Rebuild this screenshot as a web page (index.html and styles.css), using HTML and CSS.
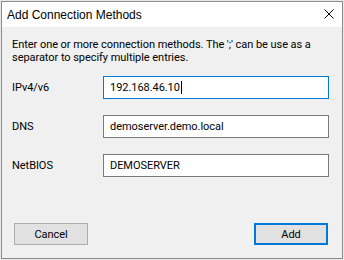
FILE: index.html
```html
<!DOCTYPE html>
<html lang="en">
<head>
    <meta charset="UTF-8">
    <meta name="viewport" content="width=device-width, initial-scale=1.0">
    <title>Add Connection Methods</title>
    <link rel="stylesheet" href="styles.css">
</head>
<body>
    <div class="window">
        <div class="title-bar">
            <span class="title">Add Connection Methods</span>
            <svg class="close" width="10" height="10" viewBox="0 0 10 10">
                <path d="M0.5 0.5 L9.5 9.5 M9.5 0.5 L0.5 9.5" stroke="#000" stroke-width="1" fill="none"/>
            </svg>
        </div>

        <div class="content">
            <p class="intro">Enter one or more connection methods. The ';' can be use as a separator to specify multiple entries.</p>

            <div class="fields">
                <div class="field">
                    <label>IPv4/v6</label>
                    <div class="textbox focused"><span class="caret">192.168.46.10</span></div>
                </div>
                <div class="field">
                    <label>DNS</label>
                    <div class="textbox">demoserver.demo.local</div>
                </div>
                <div class="field">
                    <label>NetBIOS</label>
                    <div class="textbox">DEMOSERVER</div>
                </div>
            </div>

            <div class="buttons">
                <button class="btn">Cancel</button>
                <button class="btn default">Add</button>
            </div>
        </div>
    </div>
</body>
</html>
```

FILE: styles.css
```css
body {
    margin: 0;
    background: #e8e8e8;
    font-family: Roboto, 'Liberation Sans', Arial, sans-serif;
    font-size: 11px;
    letter-spacing: -0.05px;
    color: #000;
}
.window {
    box-sizing: border-box;
    margin: 1px 0 0 1px;
    width: 342px;
    height: 258px;
    border: 1px solid #8c8c8c;
    background: #f0f0f0;
    display: flex;
    flex-direction: column;
}
.title-bar {
    height: 25px;
    background: #fff;
    display: flex;
    align-items: center;
    justify-content: space-between;
    padding: 0 8px 0 5px;
}
.title {
    font-family: 'Liberation Sans', Arial, sans-serif;
    font-size: 12px;
    letter-spacing: 0;
    padding-top: 1px;
}
.close {
    display: block;
    margin-top: -2px;
}
.content {
    flex: 1;
    display: flex;
    flex-direction: column;
    padding: 11px 13px 13px 10px;
}
.intro {
    margin: 0;
    line-height: 13px;
}
.fields {
    display: flex;
    flex-direction: column;
    gap: 16px;
    margin-top: 12px;
}
.field {
    display: flex;
    align-items: center;
}
.field label {
    width: 91px;
}
.textbox {
    box-sizing: border-box;
    flex: 1;
    height: 23px;
    border: 1px solid #7a7a7a;
    background: #fff;
    padding: 0 6px;
    line-height: 21px;
    white-space: nowrap;
}
.textbox.focused {
    border-color: #0078d7;
}
.caret {
    border-right: 1px solid #000;
    padding-right: 1px;
}
.buttons {
    margin-top: auto;
    display: flex;
    justify-content: space-between;
    padding: 0 1px 0 2px;
}
.btn {
    box-sizing: border-box;
    width: 74px;
    height: 22px;
    border: 1px solid #adadad;
    background: #e1e1e1;
    font-family: inherit;
    font-size: 11px;
    letter-spacing: inherit;
    color: #000;
    padding: 0;
}
.btn.default {
    border: 2px solid #0078d7;
}
```
